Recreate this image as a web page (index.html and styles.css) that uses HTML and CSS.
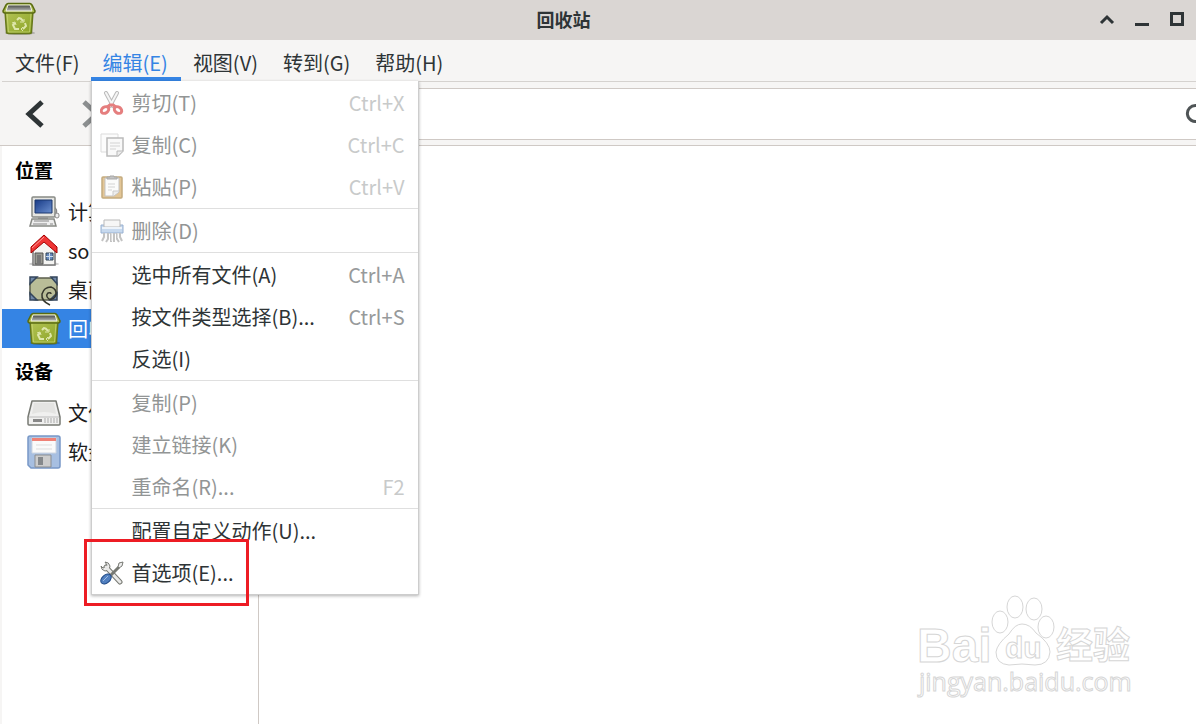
FILE: index.html
```html
<!DOCTYPE html>
<html lang="zh-CN">
<head>
  <meta charset="UTF-8">
  <title>回收站</title>
  <link rel="stylesheet" href="styles.css">
</head>
<body>

<svg class="defs" aria-hidden="true">
  <defs>
    <linearGradient id="green" x1="0" y1="0" x2="1" y2="1">
      <stop offset="0" stop-color="#b4c455"/>
      <stop offset="1" stop-color="#8ba326"/>
    </linearGradient>
    <linearGradient id="dark" x1="0" y1="0" x2="0" y2="1">
      <stop offset="0" stop-color="#454744"/>
      <stop offset="1" stop-color="#b9bbb8"/>
    </linearGradient>
    <linearGradient id="screen" x1="0" y1="0" x2="1" y2="1">
      <stop offset="0" stop-color="#173a86"/>
      <stop offset="1" stop-color="#6c90cf"/>
    </linearGradient>
    <symbol id="trash" viewBox="0 0 34 34">
      <ellipse cx="18" cy="31" rx="15" ry="2" fill="#000" opacity="0.2"/>
      <path d="M3 9h28l-1.500 21q0 1.500-2 1.500H6.500q-2 0-2-1.500z" fill="url(#green)" stroke="#66771a" stroke-width="1.500"/>
      <path d="M5 11h24l-1.500 19h-21z" fill="none" stroke="#d3df83" stroke-width="1" opacity="0.6"/>
      <path d="M4 3q1-1.500 2-1.500h22q1 0 2 1.500l3 6q0 2-2 2H3q-2 0-2-2z" fill="#a8b94b" stroke="#5a6b12" stroke-width="1.500"/>
      <path d="M6 3h22l2 6H4z" fill="url(#dark)" stroke="#f0f2dc" stroke-width="1"/>
      <g fill="none" stroke="#e6edb8" stroke-width="2" opacity="0.9">
        <path d="M15 18l2-2q2 0 4 3M23 21l1 3-3 3M17 27h-4l-2-4 2-2"/>
        <path d="M22 17v3h-4M21 25l-2 2 2 2M10 21l3-1 1 3" stroke-width="1"/>
      </g>
    </symbol>
  </defs>
</svg>

<header class="titlebar">
  <svg class="app-icon"><use href="#trash"/></svg>
  <h1>回收站</h1>
  <div class="window-buttons">
    <button aria-label="卷起"><svg width="16" height="16" viewBox="0 0 16 16"><path d="M2 12l6-6 6 6" fill="none" stroke="#2e3436" stroke-width="3"/></svg></button>
    <button aria-label="最小化"><svg width="16" height="16" viewBox="0 0 16 16"><path d="M1 13.500h14" stroke="#2e3436" stroke-width="3"/></svg></button>
    <button aria-label="最大化"><svg width="16" height="16" viewBox="0 0 16 16"><path d="M2.500 2.500h11v11h-11z" fill="none" stroke="#2e3436" stroke-width="3"/></svg></button>
  </div>
</header>

<nav class="menubar">
  <button>文件(F)</button>
  <div class="open">
    <button class="active">编辑(E)</button>
    <div class="menu">
      <button disabled>
        <svg class="icon faded" viewBox="0 0 24 24">
          <path d="M6 2l7 13M17 2l-7 13" stroke="#777" stroke-width="4" stroke-linecap="round"/>
          <path d="M6 2l7 13M17 2l-7 13" stroke="#eee" stroke-width="2" stroke-linecap="round"/>
          <g fill="none" stroke="#cc0000" stroke-width="3">
            <ellipse cx="5" cy="19" rx="4" ry="3" transform="rotate(-35 5 19)"/>
            <ellipse cx="18" cy="19" rx="4" ry="3" transform="rotate(35 18 19)"/>
            <path d="M7 16l3-2h3l3 2"/>
          </g>
        </svg>
        <span>剪切(T)</span><kbd>Ctrl+X</kbd>
      </button>
      <button disabled>
        <svg class="icon faded" viewBox="0 0 24 24">
          <path d="M1 1h17v18H1z" fill="#fafafa" stroke="#bbb"/>
          <path d="M7 5h16v13l-5 5H7z" fill="#f4f4f4" stroke="#777" stroke-width="1.500"/>
          <path d="M10 10h10M10 13h10M10 16h6" stroke="#aaa"/>
          <path d="M17 23v-5h6" fill="#ddd" stroke="#777"/>
        </svg>
        <span>复制(C)</span><kbd>Ctrl+C</kbd>
      </button>
      <button disabled>
        <svg class="icon faded" viewBox="0 0 24 24">
          <rect x="2" y="2" width="20" height="21" rx="1" fill="#c98e2f" stroke="#8a5902" stroke-width="1.500"/>
          <path d="M5 3h14v14l-5 4H5z" fill="#f8f8f8" stroke="#888"/>
          <path d="M8 9h7M8 12h7M8 15h4" stroke="#aaa"/>
          <path d="M13 21v-5h6" fill="#ddd" stroke="#999"/>
          <path d="M7 4V2h3V1h4v1h3v2z" fill="#888" stroke="#555"/>
        </svg>
        <span>粘贴(P)</span><kbd>Ctrl+V</kbd>
      </button>
      <hr>
      <button disabled>
        <svg class="icon faded" viewBox="0 0 24 24">
          <path d="M1 6h22v8H1z" fill="#91b4df" stroke="#3465a4"/>
          <path d="M4 1h16v7H4z" fill="#eee" stroke="#777"/>
          <path d="M2 9h20" stroke="#dce8f6" stroke-width="2"/>
          <path d="M4 14v4l-2 4M8 14v6l-2 3M11 14v9M14 14v9M17 14v6l2 3M20 14v4l2 4" fill="none" stroke="#888" stroke-width="2"/>
          <path d="M6 14v6M12 14v8M18 14v5" stroke="#eee"/>
        </svg>
        <span>删除(D)</span>
      </button>
      <hr>
      <button><span>选中所有文件(A)</span><kbd>Ctrl+A</kbd></button>
      <button><span>按文件类型选择(B)...</span><kbd>Ctrl+S</kbd></button>
      <button><span>反选(I)</span></button>
      <hr>
      <button disabled><span>复制(P)</span></button>
      <button disabled><span>建立链接(K)</span></button>
      <button disabled><span>重命名(R)...</span><kbd>F2</kbd></button>
      <hr>
      <button><span>配置自定义动作(U)...</span></button>
      <button class="marked">
        <svg class="icon" viewBox="0 0 24 24">
          <path d="M6 6l14 15" stroke="#777973" stroke-width="5" stroke-linecap="round"/>
          <path d="M5 1l2 3-1 2-3 1-2-2q0 4 4 5l4-1 1-4q-1-4-5-4z" fill="#eee" stroke="#777973"/>
          <path d="M6 6l14 15" stroke="#e9e9e7" stroke-width="3" stroke-linecap="round"/>
          <path d="M10 15l9-9" stroke="#777973" stroke-width="3"/>
          <path d="M18 6l1-4 4-1-1 4-3 2z" fill="#eee" stroke="#777973"/>
          <ellipse cx="6" cy="18" rx="6" ry="4" transform="rotate(-42 6 18)" fill="#507fbf" stroke="#204a87"/>
          <path d="M3 20l5-5" stroke="#9dbbe4"/>
        </svg>
        <span>首选项(E)...</span>
      </button>
    </div>
  </div>
  <button>视图(V)</button>
  <button>转到(G)</button>
  <button>帮助(H)</button>
</nav>

<div class="toolbar">
  <button aria-label="后退"><svg width="20" height="28" viewBox="0 0 20 28"><path d="M17 2L4 14l13 12" fill="none" stroke="#2e3436" stroke-width="5"/></svg></button>
  <button aria-label="前进" disabled><svg width="20" height="28" viewBox="0 0 20 28"><path d="M3 2l13 12L3 26" fill="none" stroke="#8b8e8f" stroke-width="5"/></svg></button>
  <div class="path">
    <input type="text" aria-label="位置">
    <button aria-label="重新载入"><svg width="22" height="22" viewBox="0 0 22 22"><path d="M18 6a8 8 0 1 0 1 7" fill="none" stroke="#4f5456" stroke-width="3"/><path d="M20 1v8h-8z" fill="#4f5456"/></svg></button>
  </div>
</div>

<div class="main">
  <aside class="sidebar">
    <h2>位置</h2>
    <a href="#">
      <svg viewBox="0 0 34 34">
        <path d="M26 12q5 2 3 6l2 3" fill="none" stroke="#888" stroke-width="1.500"/>
        <rect x="5" y="2" width="23" height="20" rx="1" fill="#e5e5e1" stroke="#888a85" stroke-width="1.500"/>
        <path d="M8 5h17v13H8z" fill="url(#screen)" stroke="#1b376c"/>
        <path d="M11 22h10v3H11z" fill="#999"/>
        <path d="M5 24h22l2 7H3z" fill="#eee" stroke="#888a85" stroke-width="1.500"/>
        <path d="M7 26h15M6 29h14M23 29h3" stroke="#aaa" stroke-width="1.500"/>
        <rect x="28" y="18" width="4" height="5" rx="2" fill="#eee" stroke="#888"/>
      </svg>计算机</a>
    <a href="#">
      <svg viewBox="0 0 34 34">
        <ellipse cx="17" cy="30" rx="15" ry="2" fill="#000" opacity="0.200"/>
        <path d="M6 15L17 5l11 10v16H6z" fill="#f4f4f2" stroke="#777" stroke-width="1.500"/>
        <path d="M8 19h8v11H8z" fill="#999a92" stroke="#555"/>
        <path d="M10 21h4v9h-4z" fill="#777"/>
        <path d="M19 19h7v7h-7z" fill="#6689bd" stroke="#345"/>
        <path d="M22.500 19v7M19 22.500h7" stroke="#cde"/>
        <path d="M17 1L4 13v6l13-11 13 11v-6z" fill="#ef3535" stroke="#a40000" stroke-width="1" stroke-linejoin="round"/>
        <path d="M17 3L5 14" stroke="#ff9b9b"/>
      </svg>so</a>
    <a href="#">
      <svg viewBox="0 0 34 34">
        <rect x="3" y="5" width="27" height="22" rx="6" fill="#b9bd98" stroke="#5b5e4c" stroke-width="1.500"/>
        <path d="M3 4h7l-7 7zM30 4v7l-6-7zM3 27v-7l7 7zM30 27h-7l7-7z" fill="#7189a8" stroke="#34465c" stroke-width="1.500"/>
        <path d="M23 32q-9-4-8-11 2-7 9-7 6 2 5 8-2 5-7 4-4-3-1-6 3-1 3 1" fill="none" stroke="#34362c" stroke-width="1.500"/>
      </svg>桌面</a>
    <a href="#" class="selected"><svg><use href="#trash"/></svg>回收站</a>
    <h2>设备</h2>
    <a href="#">
      <svg viewBox="0 0 34 34">
        <path d="M5 5h24l4 16v7q0 1-1 1H2q-1 0-1-1v-7z" fill="#f0f0ef" stroke="#777973" stroke-width="1.500" stroke-linejoin="round"/>
        <path d="M2 21h30" stroke="#bbb"/>
        <path d="M7 7h20l2 11q-12-4-24 0z" fill="#e4e4e2"/>
        <path d="M6 23h9v3H6z" fill="#888"/>
        <path d="M18 22v5M21 22v5M24 22v5M27 22v5M30 22v5" stroke="#aaa"/>
      </svg>文件系统</a>
    <a href="#">
      <svg viewBox="0 0 34 34">
        <path d="M3 1h28q2 0 2 2v28q0 2-2 2H4l-3-3V3q0-2 2-2z" fill="#a7bfe1" stroke="#7898c7" stroke-width="1.500"/>
        <path d="M5 3h24v15H5z" fill="#fafafa" stroke="#cdd5e0"/>
        <path d="M5 3h24v3H5z" fill="#ef8176"/>
        <path d="M9 10h16M9 14h16" stroke="#ddd"/>
        <path d="M8 20h16v12H8z" fill="#ccc" stroke="#8a8d91"/>
        <path d="M11 22h5v8h-5z" fill="#85888b"/>
      </svg>软盘</a>
  </aside>
  <main class="files"></main>
</div>

<svg class="watermark" width="220" height="110" viewBox="0 0 220 110">
  <g fill="#fff" stroke="#d6d6d6" stroke-width="1">
    <ellipse cx="84" cy="28" rx="8" ry="11"/>
    <ellipse cx="99" cy="13" rx="8" ry="11"/>
    <ellipse cx="118" cy="15" rx="8" ry="11"/>
    <ellipse cx="130" cy="33" rx="8" ry="11"/>
    <path d="M106 30q8 0 14 9 14 10 14 19-1 13-15 13-13-2-26 0-13-1-13-13 1-8 13-18 6-10 13-10z"/>
    <text class="logo" x="1" y="68" font-size="48">Bai</text>
    <text class="logo" x="89" y="64" font-size="30">du</text>
    <text class="logo-cjk" x="140" y="65" font-size="37">经验</text>
    <text class="logo-url" x="3" y="97" font-size="25">jingyan.baidu.com</text>
  </g>
</svg>

</body>
</html>
```

FILE: styles.css
```css
*, *::after {
  box-sizing: border-box;
}
body {
  margin: 0;
  height: 100vh;
  display: flex;
  flex-direction: column;
  overflow: hidden;
  position: relative;
  font-family: "Noto Sans CJK SC", sans-serif;
  font-size: 20px;
  line-height: 28px;
  color: #2e3436;
  background-color: #f6f5f4;
}
button {
  font: inherit;
  color: inherit;
  background: none;
  border: 0;
  padding: 0;
}
svg {
  flex: none;
  display: block;
}
.defs {
  position: absolute;
  width: 0;
  height: 0;
}

/* title bar */
.titlebar {
  display: grid;
  grid-template-columns: 1fr auto 1fr;
  align-items: center;
  height: 40px;
  padding: 0 11px 2px 2px;
  background-color: #dad6d3;
}
.titlebar h1 {
  margin: 0;
  padding-right: 60px;
  font-size: 18px;
  line-height: 28px;
}
.app-icon {
  width: 34px;
  height: 34px;
}
.window-buttons {
  display: flex;
  justify-content: flex-end;
  gap: 19px;
}

/* menu bar */
.menubar {
  display: flex;
  height: 42px;
  margin-left: 2px;
  border-bottom: 1px solid #d5d2cf;
}
.menubar > button, .active {
  height: 41px;
  padding: 4px 13px 0 12px;
}
.menubar > button:first-child {
  padding: 4px 11px 0 13px;
}
.open {
  position: relative;
}
.active {
  color: #3584e4;
  border-bottom: 4px solid #3584e4;
  padding-top: 8px;
}
.menu {
  position: absolute;
  z-index: 2;
  top: 41px;
  left: 0;
  width: 328px;
  padding-top: 1px;
  background-color: #fff;
  border: 1px solid #cdcdcd;
  border-top: 0;
  box-shadow: 0 1px 3px rgba(0, 0, 0, 0.3);
}
.menu button {
  display: flex;
  align-items: center;
  width: 100%;
  height: 42px;
  padding: 0 13px 0 40px;
  text-align: left;
}
.menu button:disabled {
  color: #929595;
}
.menu span {
  flex: 1;
}
.menu kbd {
  font: inherit;
  color: #979a9b;
}
.menu button:disabled kbd {
  color: #c8caca;
}
.menu hr {
  height: 2px;
  margin: 0;
  border: 0;
  border-top: 1px solid #dfdfdf;
}
.icon {
  width: 24px;
  height: 24px;
  margin-left: -32px;
  margin-right: 8px;
}
.faded {
  opacity: 0.5;
}
.marked {
  position: relative;
}
.marked::after {
  content: "";
  position: absolute;
  top: -13px;
  left: -8px;
  width: 165px;
  height: 67px;
  border: 3px solid #ed1c24;
}

/* toolbar */
.toolbar {
  display: flex;
  align-items: center;
  gap: 36px;
  height: 64px;
  padding-left: 25px;
  border-bottom: 1px solid #cfc9c5;
}
.path {
  flex: 1;
  display: flex;
  align-items: center;
  height: 52px;
  margin-right: -24px;
  padding-right: 13px;
  background-color: #fff;
  border: 1px solid #cfc9c5;
}
.path input {
  flex: 1;
  border: 0;
  outline: 0;
  font: inherit;
  background: none;
}

/* places and file list */
.main {
  flex: 1;
  display: flex;
  margin-left: 2px;
  background-color: #fff;
}
.sidebar {
  width: 257px;
  padding-top: 1px;
  border-right: 1px solid #cfc9c5;
  color: #000;
}
.sidebar h2 {
  margin: 0;
  padding-left: 13px;
  font-size: 19px;
  line-height: 45px;
}
.sidebar a {
  display: flex;
  align-items: center;
  gap: 7px;
  height: 39px;
  padding-left: 25px;
  color: #1c1c1c;
  text-decoration: none;
}
.sidebar a svg {
  width: 34px;
  height: 34px;
}
.sidebar .selected {
  color: #fff;
  background-color: #3584e4;
}
.files {
  flex: 1;
}

.watermark {
  position: absolute;
  right: 60px;
  bottom: 20px;
}
.logo {
  font-family: "Liberation Sans", sans-serif;
  font-weight: bold;
}
.logo-cjk {
  font-weight: bold;
}
.logo-url {
  font-family: "Open Sans", sans-serif;
}
```
